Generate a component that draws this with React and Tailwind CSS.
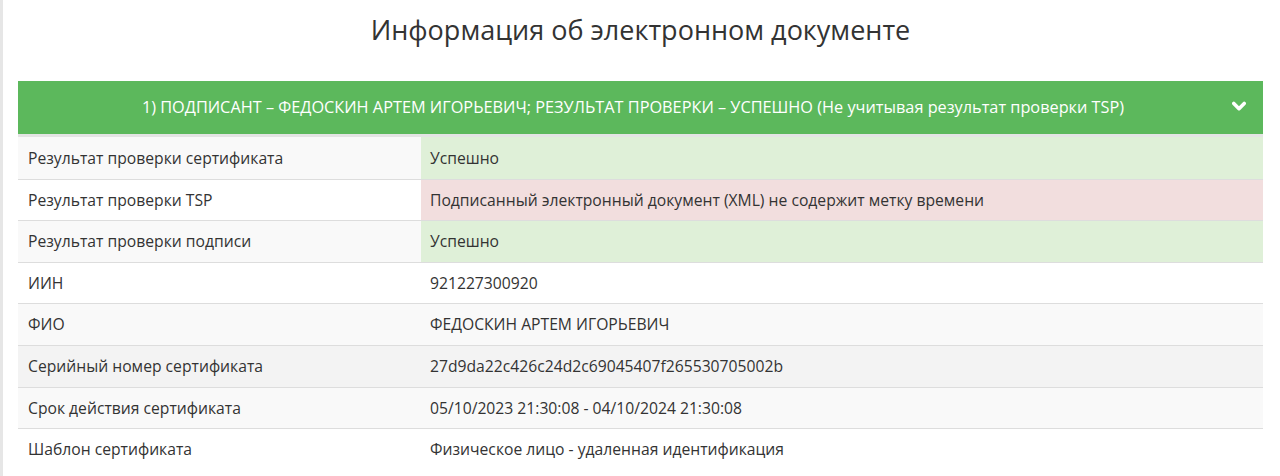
import React from "react";

const rows = [
  { label: "Результат проверки сертификата", value: "Успешно", lbg: "bg-[#f9f9f9]", vbg: "bg-[#dff0d8]" },
  { label: "Результат проверки TSP", value: "Подписанный электронный документ (XML) не содержит метку времени", lbg: "bg-white", vbg: "bg-[#f2dede]" },
  { label: "Результат проверки подписи", value: "Успешно", lbg: "bg-[#f9f9f9]", vbg: "bg-[#dff0d8]" },
  { label: "ИИН", value: "921227300920", lbg: "bg-white", vbg: "bg-white" },
  { label: "ФИО", value: "ФЕДОСКИН АРТЕМ ИГОРЬЕВИЧ", lbg: "bg-[#f9f9f9]", vbg: "bg-[#f9f9f9]" },
  { label: "Серийный номер сертификата", value: "27d9da22c426c24d2c69045407f265530705002b", lbg: "bg-[#f3f3f3]", vbg: "bg-[#f3f3f3]" },
  { label: "Срок действия сертификата", value: "05/10/2023 21:30:08 - 04/10/2024 21:30:08", lbg: "bg-[#f9f9f9]", vbg: "bg-[#f9f9f9]" },
  { label: "Шаблон сертификата", value: "Физическое лицо - удаленная идентификация", lbg: "bg-white", vbg: "bg-white" },
];

export default function App() {
  return (
    <div className="flex min-h-[476px] bg-white text-[#333] font-['Open_Sans',sans-serif]">
      <div className="w-[3px] shrink-0 bg-[#e6e6e6]" />
      <div className="ml-[15px] w-[1245px] shrink-0">
        <h1 className="pt-[10px] h-[81px] text-center text-[27px] leading-[40px] font-normal text-[#333]">
          Информация об электронном документе
        </h1>
        <div className="flex h-[53px] items-center justify-center bg-[#5cb85c] pr-[15px] text-[16.3px] text-white relative">
          <span>1) ПОДПИСАНТ – ФЕДОСКИН АРТЕМ ИГОРЬЕВИЧ; РЕЗУЛЬТАТ ПРОВЕРКИ – УСПЕШНО (Не учитывая результат проверки TSP)</span>
          <svg className="absolute right-[17px] top-[20px]" width="14" height="11" viewBox="0 0 14 11">
            <path d="M1.8 2.5 L7 7.7 L12.2 2.5" stroke="white" strokeWidth="3.6" fill="none" strokeLinecap="round" strokeLinejoin="round" />
          </svg>
        </div>
        <div className="h-[3px] bg-[#e4e4e4]" />
        <div className="text-[15.7px]">
          {rows.map((r, i) => (
            <div key={i} className={`flex h-[41.6px] ${i > 0 ? "border-t border-[#dddddd]" : ""}`}>
              <div className={`w-[403px] shrink-0 flex items-center pl-[10px] pt-[1px] ${r.lbg}`}>{r.label}</div>
              <div className={`flex-1 flex items-center pl-[9px] pt-[1px] ${r.vbg}`}>{r.value}</div>
            </div>
          ))}
        </div>
      </div>
    </div>
  );
}
